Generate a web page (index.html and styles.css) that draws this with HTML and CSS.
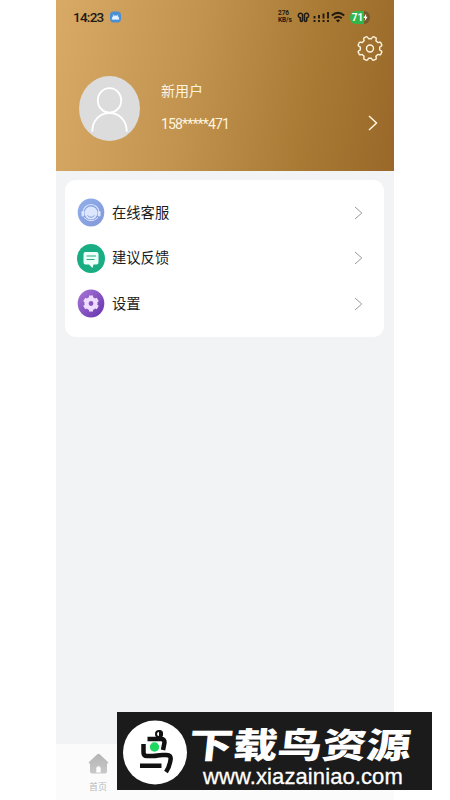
FILE: index.html
```html
<!DOCTYPE html>
<html lang="zh-CN">
<head>
<meta charset="utf-8">
<title>新用户</title>
<link rel="stylesheet" href="styles.css">
</head>
<body>
<main class="phone">
  <header class="hero">
    <div class="status">
      <span class="time">14:23</span>
      <svg class="app" viewBox="0 0 12 12"><rect width="12" height="12" rx="4" fill="#4a8fd3"/><path d="M2.300 8.400a3.700 3.700 0 0 1 7.400 0zM3.200 3.400l1.200 1.700M8.800 3.400L7.600 5.100" fill="#e4f4ff" stroke="#e4f4ff" stroke-width=".8"/></svg>
      <span class="speed"><span>276</span><span>KB/s</span></span>
      <svg class="buds" viewBox="0 0 13 12" fill="none" stroke="#201a12" stroke-width="1.500"><path d="M5.500 5.500V3.500a2.200 2.300 0 1 0-2.200 3.300V9.500q1.100 1.900 2.200 0zM7.500 5.500V3.500a2.200 2.300 0 1 1 2.200 3.300V9.500q-1.100 1.900-2.200 0z"/></svg>
      <svg class="signal" viewBox="0 0 17 12" stroke="#201a12" stroke-width="1.900"><path d="M1.500 5v2.500M6 4v3.500M10.500 2.500v5M15 1v6.500M1.500 8.900v2M6 8.900v2M10.500 8.900v2M15 8.900v2"/></svg>
      <svg class="wifi" viewBox="0 0 14 12" fill="none" stroke="#201a12" stroke-width="2"><path d="M.8 4.500Q7-.8 13.200 4.500M3.200 7.300q3.800-3.200 7.600 0"/><path d="M7 11.500L4.900 9.300q2.100-1.600 4.200 0z" fill="#201a12" stroke="none"/></svg>
      <span class="battery"><span>71</span><svg viewBox="0 0 6 9"><path d="M3.800 0L.5 5h2L2 9l3.500-5.300h-2z" fill="#fff"/></svg></span>
    </div>
    <div class="tools">
      <svg class="gear" viewBox="0 0 26 26" fill="none" stroke="#fff5df" stroke-width="1.400" stroke-linejoin="round"><path d="M14.400 3.300Q15.200 1.500 16.300 1.100L19.050 2.300Q19.500 3.500 18.900 5.200L20.800 7.100Q22.500 6.500 23.700 6.950L24.900 9.700Q24.500 10.800 22.700 11.600V14.400Q24.500 15.200 24.900 16.300L23.700 19.050Q22.500 19.500 20.800 18.900L18.900 20.800Q19.500 22.500 19.050 23.700L16.300 24.900Q15.200 24.500 14.400 22.700H11.600Q10.800 24.500 9.700 24.900L6.950 23.700Q6.500 22.500 7.100 20.800L5.200 18.900Q3.500 19.500 2.300 19.050L1.100 16.300Q1.500 15.200 3.300 14.400V11.600Q1.500 10.800 1.100 9.700L2.300 6.950Q3.500 6.500 5.200 7.100L7.100 5.200Q6.500 3.500 6.950 2.300L9.700 1.100Q10.800 1.500 11.600 3.300z"/><circle cx="13" cy="13" r="3.500"/></svg>
    </div>
    <div class="profile">
      <svg class="avatar" viewBox="0 0 60 64"><ellipse cx="30" cy="32" rx="30" ry="32" fill="#dcdcdc"/><g fill="none" stroke="#fff" stroke-width="1.800"><ellipse cx="30" cy="24" rx="11.500" ry="12"/><path d="M13 55c0-11 7-18.500 17-18.500S47 44 47 55"/></g></svg>
      <div class="who"><span>新用户</span><span class="tel">158*****471</span></div>
      <svg class="more" viewBox="0 0 10 16" fill="none" stroke="#fff5df" stroke-width="1.500"><path d="M1 1l7.500 7L1 15"/></svg>
    </div>
  </header>
  <section class="card">
    <div class="row">
      <svg class="icon" viewBox="0 0 28 28"><defs><linearGradient id="blue" x2="1" y2="1"><stop stop-color="#91b0ec"/><stop offset="1" stop-color="#8397d8"/></linearGradient></defs><ellipse cx="14" cy="14" rx="13.300" ry="14" fill="url(#blue)"/><circle cx="14" cy="14.500" r="6.500" fill="#dce7ff"/><path d="M6 14a8 8 0 0 1 16 0" fill="none" stroke="#dce7ff" stroke-width="1.200"/><rect x="4.500" y="12.500" width="2.700" height="5.500" rx="1.300" fill="#dce7ff"/><rect x="20.800" y="12.500" width="2.700" height="5.500" rx="1.300" fill="#dce7ff"/><path d="M10.500 17q3.500 3.500 7 0" fill="none" stroke="#849fe0"/><path d="M7 19q7 6.500 14 0" fill="none" stroke="#dce7ff"/></svg>
      <span class="label">在线客服</span><svg class="arrow" viewBox="0 0 9 14"><path d="M1 1l6.800 6L1 13"/></svg>
    </div>
    <div class="row">
      <svg class="icon" viewBox="0 0 28 28"><ellipse cx="14" cy="14" rx="14" ry="14.500" fill="#19ad83"/><path d="M8.500 7.500h11a2 2 0 0 1 2 2v8.500a2 2 0 0 1-2 2h-3l-1 3.500-3.500-3.500H8.500a2 2 0 0 1-2-2V9.500a2 2 0 0 1 2-2z" fill="#ecfff9"/><path d="M9.500 11.500H19M9.500 15h8" stroke="#29ab87" stroke-width="1.200"/></svg>
      <span class="label">建议反馈</span><svg class="arrow" viewBox="0 0 9 14"><path d="M1 1l6.800 6L1 13"/></svg>
    </div>
    <div class="row">
      <svg class="icon" viewBox="0 0 28 28"><defs><linearGradient id="violet" x2="1" y2="1"><stop stop-color="#a878d8"/><stop offset="1" stop-color="#6532ad"/></linearGradient></defs><ellipse cx="14" cy="14" rx="13.300" ry="14" fill="url(#violet)"/><circle cx="14" cy="14" r="4.500" fill="none" stroke="#efddff" stroke-width="4.200"/><path d="M14 6v3M14 19v3M7.200 10.100l2.600 1.500M18.200 16.400l2.600 1.500M7.200 17.900l2.600-1.500M18.200 11.600l2.600-1.500" stroke="#efddff" stroke-width="4"/></svg>
      <span class="label">设置</span><svg class="arrow" viewBox="0 0 9 14"><path d="M1 1l6.800 6L1 13"/></svg>
    </div>
  </section>
  <nav class="tabs">
    <div class="tab"><svg viewBox="0 0 21 20"><defs><linearGradient id="home" x2="0" y2="1"><stop stop-color="#b5b5b5"/><stop offset="1" stop-color="#c8c8c8"/></linearGradient></defs><path d="M9.300.7q1.200-1 2.400 0L20 8.400q1.200 1.600-1 1.600V18q0 2-2 2H4q-2 0-2-2v-8q-2.200 0-1-1.600z" fill="url(#home)"/><path d="M8.300 19v-4a2.200 2.200 0 0 1 4.400 0v4z" fill="#fff"/></svg><span>首页</span></div>
  </nav>
</main>
<aside class="banner">
  <svg class="bird" viewBox="0 0 64 64"><circle cx="32" cy="32" r="32" fill="#fff"/><g fill="none" stroke="#111" stroke-width="4.500"><path d="M24.500 18.500H38q3.500 0 3.500 3.500l-1.500 7.500M20.500 23.500V32q0 3.500 3.500 3.500h5.500q3 0 5-.5t5-.5h4q5 0 4 5-1 7-4.500 12M17 45.200h21.500"/><circle cx="36" cy="13.500" r="3" stroke-width="2"/></g><path d="M36 9.500a4 4 0 0 1 0 8" fill="#111"/><circle cx="31.500" cy="26.500" r="4.700" fill="#20d860"/></svg>
  <div class="brand"><span class="name">下载鸟资源</span><span class="url">www.xiazainiao.com</span></div>
</aside>
</body>
</html>
```
FILE: styles.css
```css
* { box-sizing: border-box; }
body { margin: 0; width: 450px; height: 800px; overflow: hidden; background: #fff; position: relative; font-family: Roboto, "Noto Sans CJK SC", sans-serif; }
svg { display: block; flex: none; }
.phone { width: 338px; height: 800px; margin-left: 56px; background: #f2f3f5; display: flex; flex-direction: column; }
.hero { height: 171px; background: linear-gradient(100deg, #d8aa66 0%, #c1934e 40%, #a87933 75%, #99682a 100%); }
.status { height: 34px; padding: 0 24px 0 17px; display: flex; align-items: center; color: #201a12; }
.time { font-size: 13.500px; letter-spacing: -.75px; font-weight: 500; width: 31px; white-space: nowrap; }
.app { width: 11px; height: 12px; margin-left: 6px; }
.speed { margin-left: auto; width: 16px; display: flex; flex-direction: column; font-size: 6.500px; line-height: 7px; font-weight: 700; letter-spacing: -.1px; }
.buds { width: 13px; height: 12px; margin-left: 3px; }
.signal { width: 17px; height: 12px; margin-left: 3px; }
.wifi { width: 14px; height: 12px; margin-left: 1px; }
.battery { width: 20px; height: 13px; margin-left: 5px; border-radius: 6px; background: linear-gradient(90deg, #31b64c 72%, #77582b 72%); display: flex; align-items: center; justify-content: center; color: #fff; font-size: 10px; font-weight: 700; }
.battery svg { width: 5px; height: 9px; }
.tools { height: 30px; padding: 1px 11px 0 0; display: flex; justify-content: flex-end; }
.gear { width: 26px; height: 27px; }
.profile { height: 88px; padding: 0 16px 0 23px; display: flex; align-items: center; }
.avatar { width: 61px; height: 65px; }
.who { margin: -2px 0 0 21px; display: flex; flex-direction: column; gap: 13px; color: #fff4df; font-size: 14px; line-height: 20px; }
.tel { letter-spacing: -.85px; }
.more { width: 10px; height: 16px; margin: 30px 0 0 auto; }
.card { width: 319px; height: 157px; margin: 9px 0 0 9px; padding: 10px 21px 10px 12px; background: #fff; border-radius: 11px; }
.row { height: 45.600px; display: flex; align-items: center; }
.icon { width: 28px; height: 29px; overflow: visible; }
.label { margin-left: 7px; font-size: 14.300px; line-height: 20px; color: #1c1c1c; }
.arrow { width: 9px; height: 14px; margin-left: auto; fill: none; stroke: #999; stroke-width: 1; }
.tabs { height: 56px; margin-top: auto; background: #fbfbfb; display: flex; }
.tab { width: 84px; padding-top: 9px; display: flex; flex-direction: column; align-items: center; color: #b9b9b9; font-size: 9px; line-height: 14px; gap: 6px; }
.tab svg { width: 21px; height: 21px; }
.banner { position: absolute; left: 117px; top: 712px; width: 315px; height: 78px; padding: 0 0 0 6px; background: #1b1b1b; color: #fff; display: flex; align-items: center; }
.bird { width: 64px; height: 65px; margin-top: 2px; }
.brand { height: 78px; padding-top: 11px; display: flex; flex-direction: column; align-items: flex-start; white-space: nowrap; }
.name { height: 40px; font: 900 35px/40px "Noto Sans CJK SC", sans-serif; transform: skewX(-6deg) scaleX(1.270); transform-origin: left bottom; }
.url { margin: 2px 0 0 16px; font: 22px/24px "Liberation Sans", sans-serif; letter-spacing: .1px; -webkit-text-stroke: .3px #fff; }
```
